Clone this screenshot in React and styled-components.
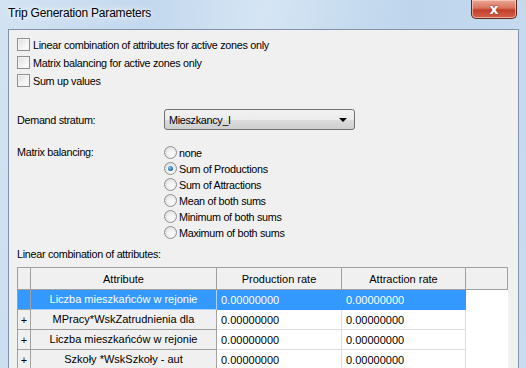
import styled, { createGlobalStyle } from "styled-components";

const GlobalStyle = createGlobalStyle`
  html, body {
    margin: 0;
    padding: 0;
    width: 526px;
    height: 368px;
    overflow: hidden;
  }
`;

const Window = styled.div`
  width: 526px;
  height: 368px;
  display: flex;
  flex-direction: column;
  overflow: hidden;
  background: linear-gradient(100deg, #d3e3f3 0%, #c3d8ee 25%, #d5e5f4 45%, #bed5ec 70%, #c9dcf0 100%);
  font-family: "Liberation Sans", Arial, sans-serif;
`;

const TitleBar = styled.div`
  height: 29px;
  flex-shrink: 0;
  display: flex;
  justify-content: space-between;
  align-items: flex-start;
  padding-left: 8px;
  padding-right: 8px;
`;

const Title = styled.div`
  font-family: "Liberation Sans", Arial, sans-serif;
  font-size: 12px;
  letter-spacing: -0.2px;
  color: #000;
  margin-top: 6px;
  text-shadow: 0 0 8px #ffffff, 0 0 4px #ffffff;
`;

const CloseButton = styled.div`
  width: 44px;
  height: 18px;
  margin-right: 1px;
  border: 1px solid #5a2a22;
  border-top: none;
  border-radius: 0 0 5px 5px;
  background: linear-gradient(#e9a795 0%, #d9735d 45%, #c3402a 55%, #d4624c 100%);
  box-shadow: inset 0 0 0 1px rgba(255, 220, 210, 0.6);
  display: flex;
  align-items: center;
  justify-content: center;
  color: #fff;
  font-family: "DejaVu Sans", sans-serif;
  font-weight: bold;
  font-size: 14px;
  text-shadow: 0 0 2px #7a1d10;
`;

const Client = styled.div`
  flex: 1;
  margin: 0 7px 0 8px;
  background: #f0f0f0;
  border: 1px solid #8292a8;
  border-bottom: none;
  padding: 8px 0 0 8px;
  display: flex;
  flex-direction: column;
  font-family: "Liberation Sans", Arial, sans-serif;
  font-size: 10.8px;
  letter-spacing: -0.3px;
  color: #000;
`;

const CheckList = styled.div`
  display: flex;
  flex-direction: column;
  gap: 5px;
`;

const CheckRow = styled.label`
  display: flex;
  align-items: center;
  gap: 3px;
  height: 13px;
`;

const Box = styled.span`
  width: 11px;
  height: 11px;
  border: 1px solid #8e8f8f;
  background: linear-gradient(135deg, #dcdcdc 0%, #f4f4f4 60%, #ffffff 100%);
  box-shadow: inset 0 0 0 1px #f4f4f4;
`;

const FieldRow = styled.div`
  display: flex;
  align-items: ${(p) => (p.$top ? "flex-start" : "center")};
  margin-top: ${(p) => p.$mt}px;
`;

const FieldLabel = styled.div`
  width: 147px;
  padding-top: ${(p) => (p.$top ? "2px" : "0")};
`;

const Select = styled.div`
  box-sizing: border-box;
  width: 191px;
  height: 21px;
  border: 1px solid #707070;
  border-radius: 3px;
  background: linear-gradient(#f2f2f2 0%, #ebebeb 50%, #dddddd 51%, #cfcfcf 100%);
  display: flex;
  align-items: center;
  justify-content: space-between;
  padding: 0 7px 0 4px;
`;

const Arrow = styled.span`
  width: 0;
  height: 0;
  border-left: 4px solid transparent;
  border-right: 4px solid transparent;
  border-top: 4px solid #000;
`;

const RadioList = styled.div`
  display: flex;
  flex-direction: column;
  gap: 3px;
  margin-top: 2px;
`;

const RadioRow = styled.label`
  display: flex;
  align-items: center;
  gap: 2px;
  height: 13px;
`;

const Radio = styled.span`
  width: 11px;
  height: 11px;
  border-radius: 50%;
  border: 1px solid #8e8f8f;
  background: radial-gradient(circle at 60% 65%, #ffffff 0%, #f0f0f0 40%, #d4d4d4 100%);
  display: flex;
  align-items: center;
  justify-content: center;
  &::after {
    content: "";
    display: ${(p) => (p.$checked ? "block" : "none")};
    width: 5px;
    height: 5px;
    border-radius: 50%;
    background: radial-gradient(circle at 40% 35%, #8fd0f5 0%, #2a7fb8 50%, #0b4a78 100%);
  }
`;

const SectionLabel = styled.div`
  margin-top: 9px;
`;

const Grid = styled.table`
  margin-top: 7px;
  width: 491px;
  border-collapse: collapse;
  table-layout: fixed;
  background: #fff;
  font-size: 11px;
  letter-spacing: 0;
  border-left: 1px solid #a0a0a0;
`;

const HeadCell = styled.th`
  height: 21px;
  padding: 0;
  font-weight: normal;
  background: #f0f0f0;
  border: 1px solid #a0a0a0;
  text-align: center;
  overflow: hidden;
`;

const RowHead = styled.td`
  height: 19px;
  padding: 0;
  background: ${(p) => (p.$sel ? "#3399ff" : "#f0f0f0")};
  border: 1px solid #a0a0a0;
  border-top-color: ${(p) => (p.$sel ? "#3399ff" : "#a0a0a0")};
  text-align: center;
`;

const AttrCell = styled.td`
  height: 19px;
  padding: 0 2px;
  background: ${(p) => (p.$sel ? "#3399ff" : "#f0f0f0")};
  color: ${(p) => (p.$sel ? "#fff" : "#000")};
  border: 1px solid ${(p) => (p.$sel ? "#a9d3ff" : "#a0a0a0")};
  text-align: center;
  vertical-align: top;
  overflow: hidden;
`;

const Clip = styled.div`
  height: 19px;
  overflow: hidden;
  line-height: 18px;
`;

const ValueCell = styled.td`
  height: 19px;
  padding: 0 4px;
  background: ${(p) => (p.$sel ? "#3399ff" : "#fff")};
  color: ${(p) => (p.$sel ? "#fff" : "#000")};
  border: 1px solid ${(p) => (p.$sel ? "#3399ff" : "#dedede")};
  border-left-color: #a0a0a0;
  overflow: hidden;
  white-space: nowrap;
`;

const FillCell = styled.td`
  background: #fff;
  border: none;
  border-left: 1px solid #a0a0a0;
`;

const rows = [
  { attr: "Liczba mieszkańców w rejonie", sel: true },
  { attr: "MPracy*WskZatrudnienia dla mieszkańców" },
  { attr: "Liczba mieszkańców w rejonie" },
  { attr: "Szkoły *WskSzkoły - aut" },
];

const balancing = [
  "none",
  "Sum of Productions",
  "Sum of Attractions",
  "Mean of both sums",
  "Minimum of both sums",
  "Maximum of both sums",
];

export default function App() {
  return (
    <Window>
      <GlobalStyle />
      <TitleBar>
        <Title>Trip Generation Parameters</Title>
        <CloseButton>x</CloseButton>
      </TitleBar>
      <Client>
        <CheckList>
          <CheckRow><Box />Linear combination of attributes for active zones only</CheckRow>
          <CheckRow><Box />Matrix balancing for active zones only</CheckRow>
          <CheckRow><Box />Sum up values</CheckRow>
        </CheckList>

        <FieldRow $mt={22}>
          <FieldLabel>Demand stratum:</FieldLabel>
          <Select>
            <span>Mieszkancy_I</span>
            <Arrow />
          </Select>
        </FieldRow>

        <FieldRow $mt={14} $top>
          <FieldLabel $top>Matrix balancing:</FieldLabel>
          <RadioList>
            {balancing.map((b, i) => (
              <RadioRow key={b}>
                <Radio $checked={i === 1} />
                {b}
              </RadioRow>
            ))}
          </RadioList>
        </FieldRow>

        <SectionLabel>Linear combination of attributes:</SectionLabel>

        <Grid>
          <colgroup>
            <col style={{ width: 13 }} />
            <col style={{ width: 186 }} />
            <col style={{ width: 125 }} />
            <col style={{ width: 124 }} />
            <col />
          </colgroup>
          <thead>
            <tr>
              <HeadCell />
              <HeadCell>Attribute</HeadCell>
              <HeadCell>Production rate</HeadCell>
              <HeadCell>Attraction rate</HeadCell>
              <HeadCell />
            </tr>
          </thead>
          <tbody>
            {rows.map((r, i) => (
              <tr key={i}>
                <RowHead $sel={r.sel}>{r.sel ? "" : "+"}</RowHead>
                <AttrCell $sel={r.sel}><Clip>{r.attr}</Clip></AttrCell>
                <ValueCell $sel={r.sel}>0.00000000</ValueCell>
                <ValueCell $sel={r.sel}>0.00000000</ValueCell>
                <FillCell />
              </tr>
            ))}
          </tbody>
        </Grid>
      </Client>
    </Window>
  );
}
